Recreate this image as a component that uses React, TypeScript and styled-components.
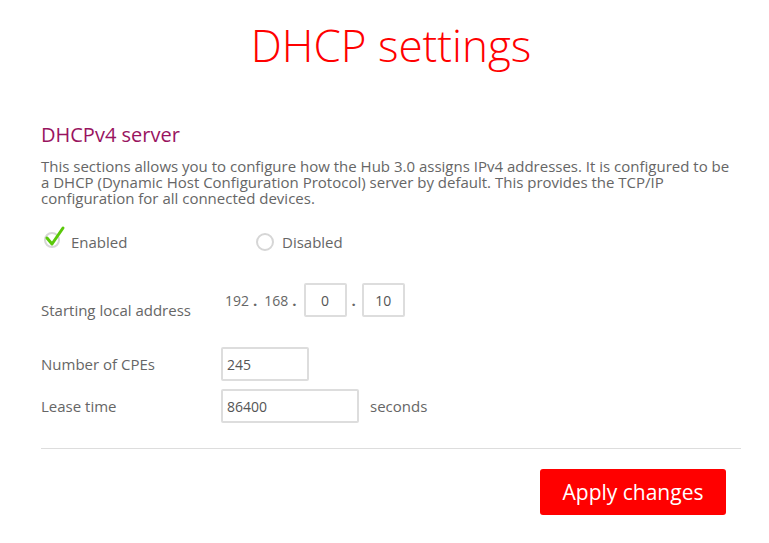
import styled, { createGlobalStyle } from "styled-components";

const GlobalStyle = createGlobalStyle`
  body {
    margin: 0;
    background: #fff;
    font-family: "Open Sans", "Liberation Sans", sans-serif;
  }
`;

const Page = styled.div`
  width: 769px;
  padding: 0 28px 0 41px;
  box-sizing: border-box;
`;

const Title = styled.h1`
  margin: 0;
  padding-top: 17px;
  text-align: center;
  font-weight: 300;
  font-size: 44px;
  line-height: 56px;
  color: #f00;
`;

const Heading = styled.h2`
  margin: 49px 0 0;
  font-weight: 400;
  font-size: 20px;
  line-height: 26px;
  color: #99145f;
`;

const Text = styled.p`
  margin: 10px 0 0;
  font-size: 15px;
  line-height: 16px;
  color: #666;
`;

const RadioRow = styled.div`
  display: flex;
  margin-top: 25px;
  height: 22px;
  align-items: center;
`;

const RadioOption = styled.label`
  display: flex;
  align-items: center;
  gap: 8px;
  width: 212px;
  font-size: 15px;
  color: #666;
`;

const Circle = styled.span`
  width: 14px;
  height: 14px;
  border: 2px solid #d6d6d6;
  border-radius: 50%;
  margin-left: 3px;
  display: inline-block;
`;

const CheckWrap = styled.span`
  position: relative;
  width: 22px;
  height: 22px;
  display: inline-block;
`;

const Row = styled.div<{ $top: number }>`
  display: flex;
  align-items: center;
  margin-top: ${p => p.$top}px;
  font-size: 15px;
  color: #666;
`;

const Label = styled.div<{ $w?: number }>`
  width: ${p => p.$w ?? 180}px;
`;

const Octet = styled.span`
  font-size: 14px;
`;

const Dot = styled.span<{ $wide?: boolean }>`
  margin: ${p => (p.$wide ? "0 6px 0 5px" : "0 7px 0 4px")};
  font-weight: 700;
`;

const Box = styled.div<{ $w: number; $center?: boolean }>`
  width: ${p => p.$w}px;
  height: 34px;
  box-sizing: border-box;
  border: 2px solid #ddd;
  border-radius: 2px;
  display: flex;
  align-items: center;
  justify-content: ${p => (p.$center ? "center" : "flex-start")};
  padding: 0 4px;
  font-size: 14px;
  color: #555;
`;

const Unit = styled.span`
  margin-left: 11px;
`;

const Divider = styled.hr`
  margin: 25px 0 0;
  border: 0;
  border-top: 1px solid #ddd;
  width: 700px;
`;

const Footer = styled.div`
  display: flex;
  justify-content: flex-end;
  width: 685px;
  margin-top: 20px;
`;

const Button = styled.button`
  width: 186px;
  height: 46px;
  background: #f00;
  border: 0;
  border-radius: 3px;
  color: #fff;
  font-family: inherit;
  font-size: 21px;
`;

const AddressGroup = styled.div`
  display: flex;
  align-items: center;
  margin-top: -20px;
`;

export default function App() {
  return (
    <Page>
      <GlobalStyle />
      <Title>DHCP settings</Title>
      <Heading>DHCPv4 server</Heading>
      <Text>
        This sections allows you to configure how the Hub 3.0 assigns IPv4 addresses. It is configured to be
        a DHCP (Dynamic Host Configuration Protocol) server by default. This provides the TCP/IP
        configuration for all connected devices.
      </Text>
      <RadioRow>
        <RadioOption>
          <CheckWrap>
            <svg width="26" height="26" viewBox="0 0 26 26" style={{ position: "absolute", left: 2, top: -6 }}>
              <circle cx="9" cy="15" r="7" fill="none" stroke="#d6d6d6" strokeWidth="2" />
              <path d="M4 13 L9 19 L20 3" fill="none" stroke="#5ac80a" strokeWidth="3" strokeLinecap="round" strokeLinejoin="round" />
            </svg>
          </CheckWrap>
          Enabled
        </RadioOption>
        <RadioOption>
          <Circle />
          Disabled
        </RadioOption>
      </RadioRow>
      <Row $top={47}>
        <Label $w={184}>Starting local address</Label>
        <AddressGroup>
          <Octet>192</Octet>
          <Dot>.</Dot>
          <Octet>168</Octet>
          <Dot>.</Dot>
          <Box $w={43} $center>0</Box>
          <Dot $wide>.</Dot>
          <Box $w={43} $center>10</Box>
        </AddressGroup>
      </Row>
      <Row $top={27}>
        <Label>Number of CPEs</Label>
        <Box $w={88}>245</Box>
      </Row>
      <Row $top={8}>
        <Label>Lease time</Label>
        <Box $w={138}>86400</Box>
        <Unit>seconds</Unit>
      </Row>
      <Divider />
      <Footer>
        <Button>Apply changes</Button>
      </Footer>
    </Page>
  );
}
